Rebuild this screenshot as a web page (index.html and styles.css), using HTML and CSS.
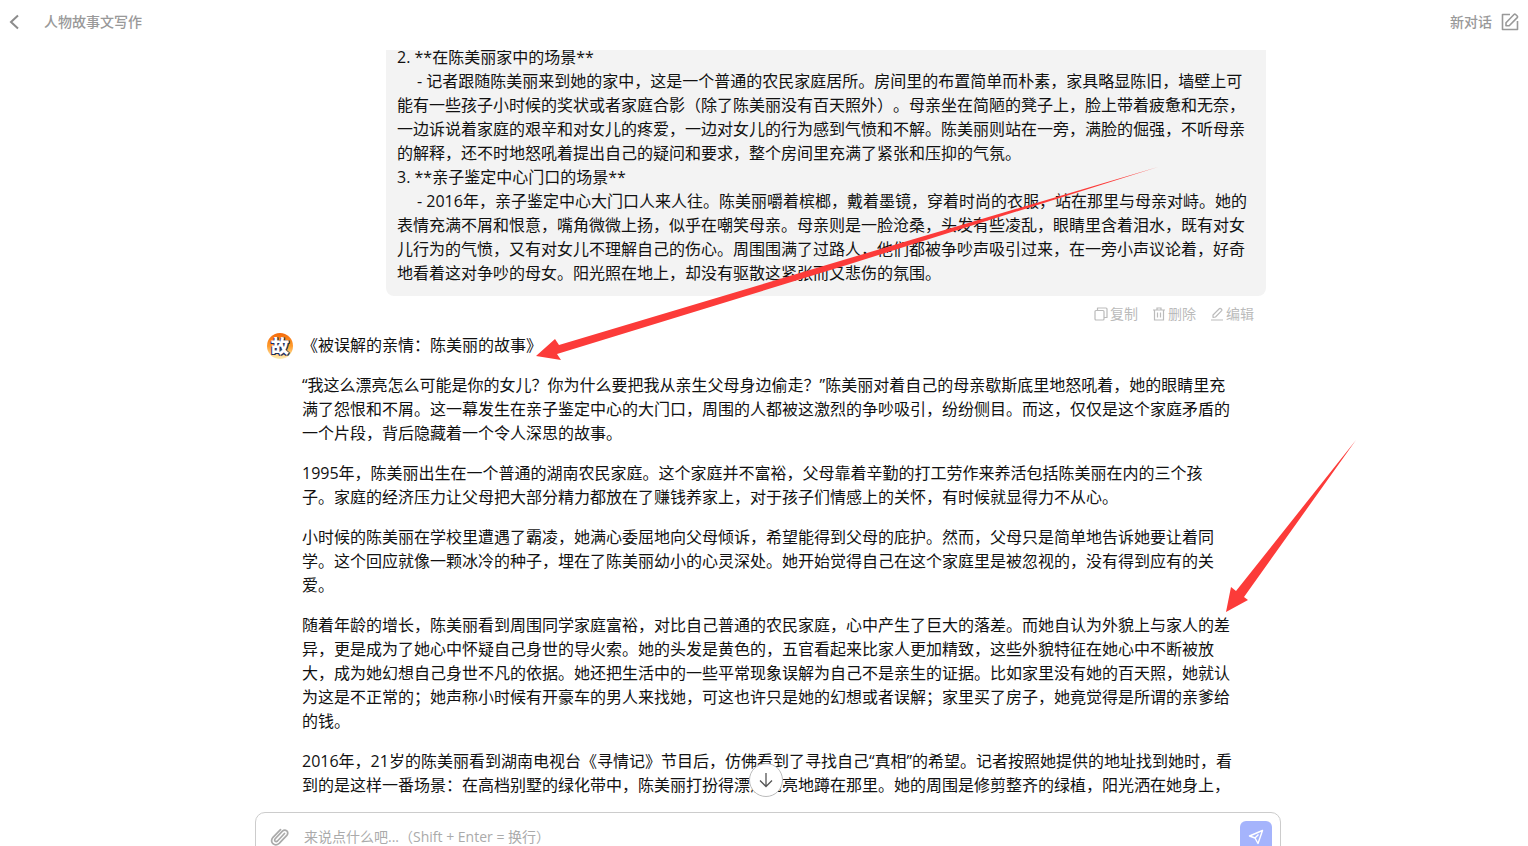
FILE: index.html
```html
<!DOCTYPE html>
<html lang="zh-CN">
<head>
    <meta charset="UTF-8">
    <meta name="viewport" content="width=device-width, initial-scale=1.0">
    <title>人物故事文写作</title>
    <link rel="stylesheet" href="styles.css">
</head>
<body>
    <header class="topbar">
        <div class="topbar-left">
            <button class="icon-btn" type="button" aria-label="返回">
                <svg width="12" height="16" viewBox="0 0 12 16" fill="none" stroke="#8c8c8c" stroke-width="2"><path d="M10 1.5L3 8l7 6.5"/></svg>
            </button>
            <h1>人物故事文写作</h1>
        </div>
        <button class="new-chat" type="button">
            新对话
            <svg width="18" height="18" viewBox="0 0 18 18" fill="none" stroke="#999" stroke-width="1.6" stroke-linejoin="round"><path d="M9 1.5H1.5v15h15V8"/><path d="M5 12.800V9.800l8-8.300q.8-.7 1.600 0l1.600 1.500q.7.8 0 1.600l-8 8.200z"/></svg>
        </button>
    </header>

    <main class="chat">
        <div class="messages">
            <div class="bubble">2. **在陈美丽家中的场景**
<span class="indent"></span>- 记者跟随陈美丽来到她的家中，这是一个普通的农民家庭居所。房间里的布置简单而朴素，家具略显陈旧，墙壁上可能有一些孩子小时候的奖状或者家庭合影（除了陈美丽没有百天照外）。母亲坐在简陋的凳子上，脸上带着疲惫和无奈，一边诉说着家庭的艰辛和对女儿的疼爱，一边对女儿的行为感到气愤和不解。陈美丽则站在一旁，满脸的倔强，不听母亲的解释，还不时地怒吼着提出自己的疑问和要求，整个房间里充满了紧张和压抑的气氛。
3. **亲子鉴定中心门口的场景**
<span class="indent"></span>- 2016年，亲子鉴定中心大门口人来人往。陈美丽嚼着槟榔，戴着墨镜，穿着时尚的衣服，站在那里与母亲对峙。她的表情充满不屑和恨意，嘴角微微上扬，似乎在嘲笑母亲。母亲则是一脸沧桑，头发有些凌乱，眼睛里含着泪水，既有对女儿行为的气愤，又有对女儿不理解自己的伤心。周围围满了过路人，他们都被争吵声吸引过来，在一旁小声议论着，好奇地看着这对争吵的母女。阳光照在地上，却没有驱散这紧张而又悲伤的氛围。</div>
            <div class="actions">
                <button type="button">
                    <svg width="14" height="14" viewBox="0 0 14 14" fill="none" stroke="#bbb" stroke-width="1.2" stroke-linejoin="round"><rect x="1" y="3.500" width="9" height="9.500" rx="1"/><path d="M3.500 3.500V1H12q1 0 1 1v8.500h-3"/></svg>
                    复制
                </button>
                <button type="button">
                    <svg width="14" height="14" viewBox="0 0 14 14" fill="none" stroke="#bbb" stroke-width="1.200"><path d="M1 3h12M5 3V1h4v2M2.500 3v10h9V3M5.500 5.500v5M8.500 5.500v5"/></svg>
                    删除
                </button>
                <button type="button">
                    <svg width="14" height="14" viewBox="0 0 14 14" fill="none" stroke="#bbb" stroke-width="1.200" stroke-linejoin="round"><path d="M1 13h12M3 10.500V8l6.500-6.500q.6-.5 1.200 0l1 1q.5.600 0 1.200L5.500 10z"/></svg>
                    编辑
                </button>
            </div>

            <div class="reply">
                <div class="avatar">故</div>
                <div class="reply-text">
                    <p>《被误解的亲情：陈美丽的故事》</p>
                    <p>“我这么漂亮怎么可能是你的女儿？你为什么要把我从亲生父母身边偷走？”陈美丽对着自己的母亲歇斯底里地怒吼着，她的眼睛里充满了怨恨和不屑。这一幕发生在亲子鉴定中心的大门口，周围的人都被这激烈的争吵吸引，纷纷侧目。而这，仅仅是这个家庭矛盾的一个片段，背后隐藏着一个令人深思的故事。</p>
                    <p>1995年，陈美丽出生在一个普通的湖南农民家庭。这个家庭并不富裕，父母靠着辛勤的打工劳作来养活包括陈美丽在内的三个孩子。家庭的经济压力让父母把大部分精力都放在了赚钱养家上，对于孩子们情感上的关怀，有时候就显得力不从心。</p>
                    <p>小时候的陈美丽在学校里遭遇了霸凌，她满心委屈地向父母倾诉，希望能得到父母的庇护。然而，父母只是简单地告诉她要让着同学。这个回应就像一颗冰冷的种子，埋在了陈美丽幼小的心灵深处。她开始觉得自己在这个家庭里是被忽视的，没有得到应有的关爱。</p>
                    <p>随着年龄的增长，陈美丽看到周围同学家庭富裕，对比自己普通的农民家庭，心中产生了巨大的落差。而她自认为外貌上与家人的差异，更是成为了她心中怀疑自己身世的导火索。她的头发是黄色的，五官看起来比家人更加精致，这些外貌特征在她心中不断被放大，成为她幻想自己身世不凡的依据。她还把生活中的一些平常现象误解为自己不是亲生的证据。比如家里没有她的百天照，她就认为这是不正常的；她声称小时候有开豪车的男人来找她，可这也许只是她的幻想或者误解；家里买了房子，她竟觉得是所谓的亲爹给的钱。</p>
                    <p>2016年，21岁的陈美丽看到湖南电视台《寻情记》节目后，仿佛看到了寻找自己“真相”的希望。记者按照她提供的地址找到她时，看到的是这样一番场景：在高档别墅的绿化带中，陈美丽打扮得漂漂亮亮地蹲在那里。她的周围是修剪整齐的绿植，阳光洒在她身上，</p>
                </div>
            </div>
        </div>
        <button class="scroll-down" type="button" aria-label="滚动到底部">
            <svg width="16" height="16" viewBox="0 0 16 16" fill="none" stroke="#555" stroke-width="1.300"><path d="M8 1v13M2 8.500l6 6 6-6"/></svg>
        </button>
    </main>

    <footer class="composer-wrap">
        <form class="composer">
            <button class="icon-btn" type="button" aria-label="添加附件">
                <svg width="20" height="20" viewBox="0 0 20 20" fill="none" stroke="#aaa" stroke-width="1.700" stroke-linecap="round"><path d="M14.500 6.500l-7 7.500q-1.300 1.100-2.400.1-1-1.100.1-2.400l7.200-7.600q2.300-2 4.400-.2 1.900 2.100 0 4.500l-7.600 8q-3.300 2.900-6.300.3-2.700-3 .1-6.400l7.500-7.700"/></svg>
            </button>
            <textarea aria-label="消息" placeholder="来说点什么吧...（Shift + Enter = 换行）"></textarea>
            <button class="send" type="submit" aria-label="发送">
                <svg width="16" height="16" viewBox="0 0 16 16" fill="none" stroke="#fff" stroke-width="1.400" stroke-linejoin="round"><path d="M14.500 1.500L1.500 7l5.500 2 3 5.500zM7 9l3.500-3.500"/></svg>
            </button>
        </form>
    </footer>

    <svg class="marks" width="1528" height="846" viewBox="0 0 1528 846" fill="#fc3b39" aria-hidden="true">
        <path d="M536 356L555 339L559 345L850 258L1158 167L850 264L557 354L561 360z"/>
        <path d="M1226 612L1231 587L1236 591L1356 440L1244 597L1248 600z"/>
    </svg>
</body>
</html>
```
FILE: styles.css
```css
* {
    box-sizing: border-box;
}
body {
    position: relative;
    display: grid;
    grid-template-rows: 50px minmax(0, 1fr) 49px;
    height: 100vh;
    margin: 0;
    overflow: hidden;
    background: #fff;
    color: #111;
    font-family: "Open Sans", "Noto Sans CJK SC", sans-serif;
    font-size: 16px;
    line-height: 24px;
    text-spacing-trim: space-all;
}
button {
    display: flex;
    align-items: center;
    padding: 0;
    border: none;
    background: none;
    font-family: inherit;
    font-size: 14px;
    line-height: 24px;
    cursor: pointer;
}
.topbar {
    display: flex;
    justify-content: space-between;
    align-items: center;
    padding: 0 9px 6px 8px;
}
.topbar-left {
    display: flex;
    align-items: center;
    gap: 24px;
}
.topbar h1 {
    margin: 0;
    color: #999;
    font-size: 14px;
    font-weight: 500;
}
.new-chat {
    gap: 9px;
    color: #999;
    font-weight: 500;
}
.chat {
    position: relative;
    display: flex;
    flex-direction: column;
    justify-content: flex-end;
    align-items: center;
    padding-left: 4px;
    overflow: hidden;
}
.messages {
    width: 100%;
    max-width: 1000px;
}
.bubble {
    width: 88%;
    margin-left: auto;
    padding: 11px;
    border-radius: 8px;
    background: #f3f3f3;
    white-space: pre-wrap;
}
.indent {
    display: inline-block;
    width: 20px;
}
.actions {
    display: flex;
    justify-content: flex-end;
    gap: 14px;
    padding: 6px 12px 7px;
}
.actions button {
    gap: 2px;
    color: #bbb;
}
.reply {
    display: flex;
    gap: 9px;
    padding: 0 32px 0 1px;
}
.avatar {
    flex: none;
    width: 26px;
    height: 26px;
    border-radius: 50%;
    background: linear-gradient(#f56a0b, #ff9b2b 50%, #fff0b8);
    color: #fff;
    font-size: 18px;
    font-weight: 900;
    line-height: 26px;
    text-align: center;
    text-shadow: 1px 1px #1c2c5c, -1px 1px #1c2c5c, 1px 0 #1c2c5c;
}
.reply-text p {
    margin: 0 0 16px;
}
.reply-text p:last-child {
    margin-bottom: 0;
}
.scroll-down {
    position: absolute;
    bottom: 0;
    left: calc(50% + 2px);
    justify-content: center;
    width: 34px;
    height: 34px;
    margin-left: -17px;
    border: 1px solid #bbb;
    border-radius: 50%;
    background: #fff;
}
.composer-wrap {
    display: flex;
    justify-content: center;
    align-items: flex-start;
    padding: 15px 0 0 8px;
    overflow: hidden;
}
.composer {
    display: flex;
    align-items: flex-start;
    width: 100%;
    max-width: 1026px;
    padding: 8px;
    border: 1px solid #ccc;
    border-radius: 10px;
}
.composer .icon-btn {
    padding: 6px;
}
.composer textarea {
    flex: 1;
    height: 48px;
    margin: 0;
    padding: 4px 8px;
    border: none;
    outline: none;
    resize: none;
    font-family: inherit;
    font-size: 14px;
    line-height: 24px;
}
.composer textarea::placeholder {
    color: #aaa;
}
.send {
    justify-content: center;
    width: 32px;
    height: 32px;
    border-radius: 6px;
    background: #a5b4fc;
}
.marks {
    position: absolute;
    top: 0;
    left: 0;
    pointer-events: none;
}
```
